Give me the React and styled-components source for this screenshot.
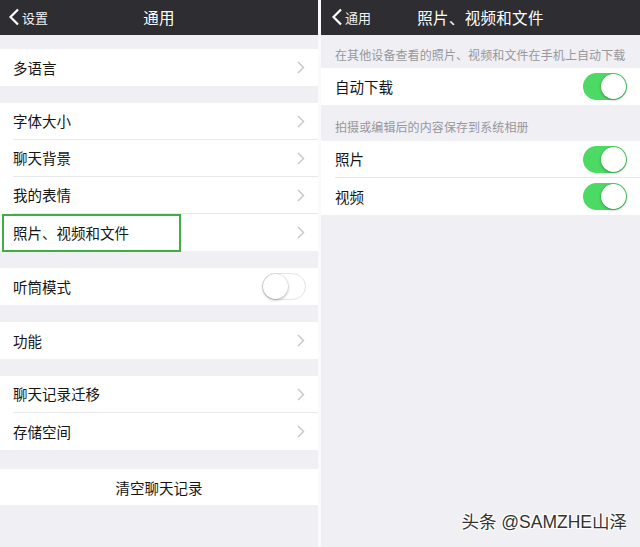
import React from 'react'
import styled, { createGlobalStyle } from 'styled-components'

const Global = createGlobalStyle`
  html, body { margin: 0; padding: 0; background: #fff; }
  body { font-family: "Noto Sans CJK SC", "Noto Sans", sans-serif; }
`

const Screen = styled.div`
  position: relative;
  display: flex;
  width: 640px;
  height: 547px;
  overflow: hidden;
  background: #fff;
`

const Panel = styled.div`
  width: ${p => p.w}px;
  flex-shrink: 0;
  display: flex;
  flex-direction: column;
  background: #efeff4;
`

const Divider = styled.div`
  width: 3px;
  background: #fafafa;
`

const Header = styled.div`
  position: relative;
  height: 35px;
  background: #2e2e32;
  display: flex;
  align-items: center;
  justify-content: center;
  color: #fff;
`

const Title = styled.div`
  font-size: 15.5px;
  letter-spacing: 0.3px;
  margin-top: -2px;
`

// back button sits over the header bar, left of the centred title
const Back = styled.div`
  position: absolute;
  left: ${p => p.left}px;
  top: 0;
  height: 34px;
  display: flex;
  align-items: center;
  gap: 2px;
  font-size: 13px;
  color: #f2f2f2;
`

const Gap = styled.div`
  height: ${p => p.h}px;
`

const Group = styled.div`
  background: #fff;
`

const Row = styled.div`
  position: relative;
  height: 37px;
  display: flex;
  padding-left: ${p => p.pl || 13}px;
`

const RowInner = styled.div`
  flex: 1;
  display: flex;
  align-items: center;
  justify-content: space-between;
  padding-right: ${p => p.pr || 13}px;
  border-bottom: 1px solid #e8e8ec;
  ${Row}:last-child & { border-bottom: none; }
`

const Label = styled.span`
  font-size: 14.5px;
  color: #151515;
  margin-top: -1px;
`

const CenterRow = styled.div`
  height: 36px;
  display: flex;
  align-items: center;
  justify-content: center;
  font-size: 14.5px;
  color: #151515;
`

const SectionNote = styled.div`
  height: ${p => p.h}px;
  box-sizing: border-box;
  display: flex;
  align-items: flex-end;
  padding: 0 14px ${p => p.pb}px;
  font-size: 12px;
  letter-spacing: 0.1px;
  color: #97979c;
`

const Highlight = styled.div`
  position: absolute;
  left: 2px;
  top: 0;
  width: 175px;
  height: 34px;
  border: 2px solid #3fae47;
`

const Track = styled.div`
  position: relative;
  width: 44px;
  height: 27px;
  box-sizing: border-box;
  border-radius: 14px;
  background: ${p => (p.on ? '#4cd964' : '#fff')};
  border: ${p => (p.on ? 'none' : '1.5px solid #e3e3e8')};
`

const Knob = styled.div`
  position: absolute;
  top: ${p => (p.on ? 1 : 0)}px;
  ${p => (p.on ? 'right: 1px;' : 'left: 0;')}
  width: 25px;
  height: 25px;
  border-radius: 50%;
  background: #fff;
  box-shadow: 0 1px 3px rgba(0, 0, 0, 0.3), 0 0 0 0.5px rgba(0, 0, 0, 0.08);
`

const Watermark = styled.div`
  position: absolute;
  right: 13px;
  bottom: 14px;
  font-family: "Liberation Sans", "Noto Sans CJK SC", sans-serif;
  font-size: 17.5px;
  color: #333;
  text-shadow: 1px 1px 0 #fff, -1px -1px 0 #fff, 1px -1px 0 #fff, -1px 1px 0 #fff;
`

function Chevron() {
  return (
    <svg width="8" height="13" viewBox="0 0 8 13">
      <polyline points="1,1 6.5,6.5 1,12" fill="none" stroke="#c4c4c9" strokeWidth="1.4" />
    </svg>
  )
}

function BackArrow() {
  return (
    <svg width="12" height="18" viewBox="0 0 12 18">
      <polyline points="10,1.5 2.5,9 10,16.5" fill="none" stroke="#fff" strokeWidth="2.2" />
    </svg>
  )
}

function Toggle({ on }) {
  return (
    <Track on={on ? 1 : 0}>
      <Knob on={on ? 1 : 0} />
    </Track>
  )
}

function NavRow({ label, highlight }) {
  return (
    <Row>
      {highlight && <Highlight />}
      <RowInner>
        <Label>{label}</Label>
        <Chevron />
      </RowInner>
    </Row>
  )
}

function SwitchRow({ label, on, pl, pr }) {
  return (
    <Row pl={pl}>
      <RowInner pr={pr}>
        <Label>{label}</Label>
        <Toggle on={on} />
      </RowInner>
    </Row>
  )
}

export default function App() {
  return (
    <Screen>
      <Global />
      <Panel w={318}>
        <Header>
          <Back left={8}><BackArrow />设置</Back>
          <Title>通用</Title>
        </Header>
        <Gap h={14} />
        <Group>
          <NavRow label="多语言" />
        </Group>
        <Gap h={17} />
        <Group>
          <NavRow label="字体大小" />
          <NavRow label="聊天背景" />
          <NavRow label="我的表情" />
          <NavRow label="照片、视频和文件" highlight />
        </Group>
        <Gap h={17} />
        <Group>
          <SwitchRow label="听筒模式" pr={12} />
        </Group>
        <Gap h={17} />
        <Group>
          <NavRow label="功能" />
        </Group>
        <Gap h={17} />
        <Group>
          <NavRow label="聊天记录迁移" />
          <NavRow label="存储空间" />
        </Group>
        <Gap h={19} />
        <Group>
          <CenterRow>清空聊天记录</CenterRow>
        </Group>
      </Panel>
      <Divider />
      <Panel w={319}>
        <Header>
          <Back left={10}><BackArrow />通用</Back>
          <Title>照片、视频和文件</Title>
        </Header>
        <SectionNote h={33} pb={5}>在其他设备查看的照片、视频和文件在手机上自动下载</SectionNote>
        <Group>
          <SwitchRow label="自动下载" on pl={14} />
        </Group>
        <SectionNote h={36} pb={6}>拍摄或编辑后的内容保存到系统相册</SectionNote>
        <Group>
          <SwitchRow label="照片" on pl={14} />
          <SwitchRow label="视频" on pl={14} />
        </Group>
      </Panel>
      <Watermark>头条 @SAMZHE山泽</Watermark>
    </Screen>
  )
}
